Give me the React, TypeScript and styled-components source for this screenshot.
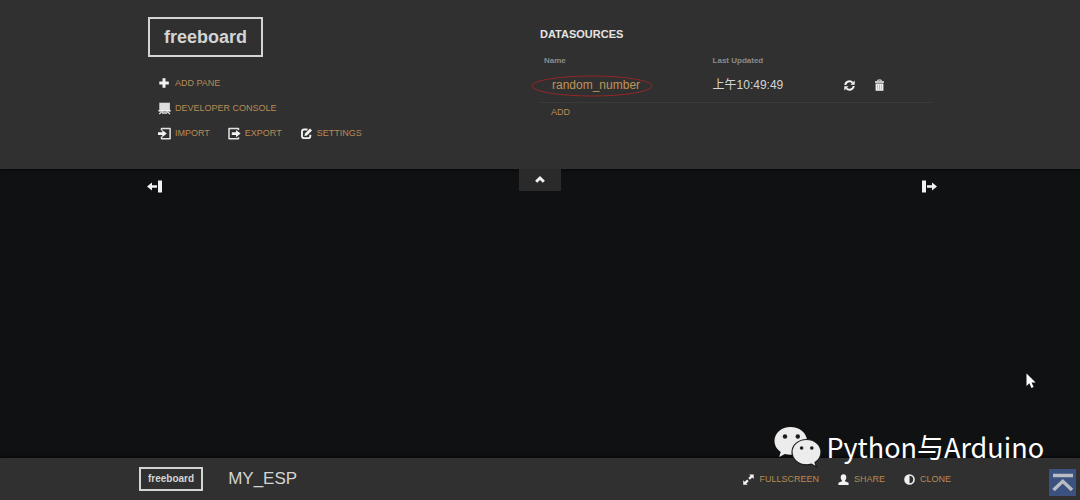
import React from "react";
import styled, { createGlobalStyle } from "styled-components";

const GlobalStyle = createGlobalStyle`
  * { box-sizing: border-box; }
  body {
    margin: 0;
    background: #101113;
    color: #d3d4d4;
    font-family: "Liberation Sans", "Noto Sans CJK SC", sans-serif;
  }
  h1, h2, ul { margin: 0; padding: 0; }
  ul { list-style: none; }
`;

const Page = styled.div`
  position: relative;
  display: flex;
  flex-direction: column;
  min-height: 100vh;
`;

const Header = styled.header`
  background: #303030;
  padding: 17px 16px 28px;
  box-shadow: 0 0 4px #000;
`;

const HeaderInner = styled.div`
  display: grid;
  grid-template-columns: 1fr 1fr;
  max-width: 784px;
  margin: 0 auto;
`;

const Brand = styled.h1`
  width: fit-content;
  padding: 0 14px;
  border: 2px solid #d3d4d4;
  font-size: 18px;
  line-height: 36px;
`;

const SmallBrand = styled.a`
  padding: 0 7px;
  border: 2px solid #d3d4d4;
  color: #d3d4d4;
  font-size: 10px;
  font-weight: bold;
  line-height: 20px;
  text-decoration: none;
`;

const Tools = styled.div`
  display: flex;
  flex-direction: column;
  gap: 9px;
  padding: 18px 0 0 10px;
`;

const ToolRow = styled.ul`
  display: flex;
  gap: 18px;
`;

const ToolButton = styled.button`
  display: flex;
  align-items: center;
  gap: 4px;
  height: 16px;
  padding: 0;
  border: 0;
  background: none;
  color: #b88b54;
  font: 9px/16px "Liberation Sans", sans-serif;
  cursor: pointer;
`;

const IconButton = styled.button`
  display: flex;
  padding: 0;
  border: 0;
  background: none;
  cursor: pointer;
`;

const Glyph = styled.svg<{ $size?: number }>`
  display: block;
  flex: none;
  width: ${(p) => p.$size ?? 13}px;
  height: ${(p) => p.$size ?? 13}px;
  fill: #f2f2f2;
  overflow: visible;
`;

const SectionTitle = styled.h2`
  padding-top: 10px;
  color: #e4e4e4;
  font-size: 11px;
  line-height: 14px;
`;

const SourceTable = styled.table`
  width: 100%;
  margin-top: 12px;
  border-collapse: collapse;
  table-layout: fixed;
`;

const Th = styled.th<{ $width?: string }>`
  width: ${(p) => p.$width ?? "auto"};
  padding: 0 4px;
  color: #8b8b8b;
  font-size: 8px;
  line-height: 16px;
  text-align: left;
`;

const Td = styled.td`
  height: 33px;
  padding: 0 4px;
  border-bottom: 1px solid #3a3a3a;
  font-size: 12px;
  line-height: 16px;
`;

const SourceLink = styled.a`
  position: relative;
  padding-left: 8px;
  color: #c09358;
  text-decoration: none;
`;

const Highlight = styled.svg`
  position: absolute;
  top: -3px;
  left: -13px;
  width: 122px;
  height: 22px;
  fill: none;
  stroke: #94262a;
  overflow: visible;
  pointer-events: none;
`;

const Actions = styled.div`
  display: flex;
  gap: 17px;
  padding-left: 1px;
`;

const AddRow = styled.div`
  padding: 1px 0 0 11px;
`;

const Board = styled.main`
  flex: 1;
  padding: 0 16px;
`;

const BoardControls = styled.div`
  display: grid;
  grid-template-columns: 1fr auto 1fr;
  align-items: start;
  max-width: 794px;
  margin: 0 auto;
`;

const ColumnButton = styled(IconButton)<{ $end?: boolean }>`
  margin-top: 10px;
  padding-left: ${(p) => (p.$end ? 0 : 4)}px;
  justify-self: ${(p) => (p.$end ? "end" : "start")};
`;

const ToggleButton = styled(IconButton)`
  justify-content: center;
  width: 42px;
  padding: 4px 0 5px;
  background: #2a2a2a;
`;

const Footer = styled.footer`
  background: #303030;
  padding: 9px 16px 9px 26px;
  box-shadow: 0 0 4px #000;
`;

const FooterInner = styled.div`
  display: flex;
  align-items: center;
  max-width: 812px;
  margin: 0 auto;
`;

const BoardName = styled.span`
  flex: 1;
  padding-left: 25px;
  font-size: 17px;
  line-height: 24px;
`;

const Watermark = styled.div`
  position: absolute;
  right: 36px;
  bottom: 31px;
  display: flex;
  align-items: center;
  gap: 4px;
  color: #fff;
  font: 27px/44px "Noto Sans CJK SC", sans-serif;
  pointer-events: none;
`;

const ChatLogo = styled.svg`
  width: 48px;
  height: 42px;
`;

const TopButton = styled.button`
  position: absolute;
  right: 4px;
  bottom: 4px;
  width: 27px;
  height: 27px;
  padding: 0;
  border: 0;
  background: #3b5180;
  cursor: pointer;
`;

const Pointer = styled.svg`
  position: absolute;
  right: 44px;
  bottom: 111px;
  width: 10px;
  height: 16px;
  fill: #fff;
  pointer-events: none;
`;

const icons = {
  plus: <path d="M4.500 1.300h3v3.200h3.300v3H7.500v3.300h-3V7.500H1.300v-3h3.200z" />,
  console: (
    <>
      <path fill="#dedede" d="M1.300.700h10.600v8H1.300z" />
      <path d="M.5 8h12.200v1.600H.5z" />
      <path d="M4.400 9.300 1.200 12M8.800 9.300 12 12M4 11h5.200" fill="none" stroke="#dedede" strokeWidth="1.400" />
    </>
  ),
  importing: (
    <>
      <path d="M3.500 3.600V1.400h8.600v10.400H3.500V9.600" fill="none" stroke="#e4e4e4" strokeWidth="1.500" strokeLinejoin="round" />
      <path d="M0 5.300h4.200V2.900l4.600 3.700-4.600 3.600V7.900H0z" />
    </>
  ),
  exporting: (
    <>
      <path d="M10.500 3V1.400H1v10.400h9.500V10.200" fill="none" stroke="#e4e4e4" strokeWidth="1.500" strokeLinejoin="round" />
      <path d="M3.800 5.300H8V2.900l4.600 3.700L8 10.200V7.900H3.800z" />
    </>
  ),
  edit: (
    <>
      <path d="M7.500 2.500H4.200Q2 2.500 2 4.700v4.200q0 2.200 2.200 2.200h3.900q2.200 0 2.200-2.200V7.800" fill="none" stroke="#f2f2f2" strokeWidth="1.900" />
      <path d="m5 6.400 5-5 2 2-5 5-2.600.6z" />
    </>
  ),
  refresh: (
    <>
      <path d="M2.300 6A4.200 4.200 0 0 1 9.600 3.700M10.700 7A4.200 4.200 0 0 1 3.400 9.300" fill="none" stroke="#f2f2f2" strokeWidth="2" />
      <path d="M11.700 1.500v4.300H7.400zM1.300 11.500V7.200h4.300z" />
    </>
  ),
  trash: (
    <>
      <path d="M2 2.200h9v1.600H2zM2.600 4.500h7.800v7.300H2.600z" />
      <path d="M4.800 2.300V1h3.400v1.300" fill="none" stroke="#f2f2f2" />
      <path d="M4.600 5.500v5.200M6.500 5.500v5.200M8.400 5.500v5.200" stroke="#8a8a8a" strokeWidth=".5" />
    </>
  ),
  expand: (
    <>
      <path d="M7.200 1.400h4.500v4.500zM5.700 11.700H1.200V7.200z" />
      <path d="m9.900 3.200-2.800 2.700M3.100 10l2.800-2.700" stroke="#f2f2f2" strokeWidth="2.400" />
    </>
  ),
  user: <path d="M6.500 1.300c2 0 2.900 1.400 2.800 3.100 0 1.400-.6 2.400-1.300 3v.9l3.600 1.500v2.100H1.400V9.800L5 8.300v-.9c-.7-.6-1.300-1.600-1.300-3C3.600 2.700 4.500 1.300 6.500 1.300z" />,
  contrast: (
    <>
      <circle cx="6.500" cy="6.500" r="4.500" fill="none" stroke="#f2f2f2" strokeWidth="1.600" />
      <path d="M6.500 2a4.500 4.500 0 0 0 0 9z" />
    </>
  ),
  columnLeft: <path d="M11 .5h4v12h-4zM0 6.500 5 2.500v2.800h5v2.400H5v2.800z" />,
  columnRight: <path d="M0 .5h4v12H0zM15 6.500l-5-4v2.800H5v2.400h5v2.800z" />,
  chevronUp: <path d="m6 3 4.900 4.700-2.100 2.100L6 7.100 3.200 9.800 1.100 7.700z" />,
};

type IconName = keyof typeof icons;

function Icon({ name }: { name: IconName }) {
  return (
    <Glyph viewBox="0 0 13 13" aria-hidden="true">
      {icons[name]}
    </Glyph>
  );
}

function Tool({ icon, label }: { icon: IconName; label: string }) {
  return (
    <li>
      <ToolButton type="button">
        <Icon name={icon} />
        {label}
      </ToolButton>
    </li>
  );
}

function ColumnGlyph({ name }: { name: IconName }) {
  return (
    <Glyph $size={15} viewBox="0 0 15 13" aria-hidden="true">
      {icons[name]}
    </Glyph>
  );
}

export default function App() {
  return (
    <Page>
      <GlobalStyle />
      <Header>
        <HeaderInner>
          <div>
            <Brand>freeboard</Brand>
            <Tools>
              <ToolRow>
                <Tool icon="plus" label="ADD PANE" />
              </ToolRow>
              <ToolRow>
                <Tool icon="console" label="DEVELOPER CONSOLE" />
              </ToolRow>
              <ToolRow>
                <Tool icon="importing" label="IMPORT" />
                <Tool icon="exporting" label="EXPORT" />
                <Tool icon="edit" label="SETTINGS" />
              </ToolRow>
            </Tools>
          </div>
          <section>
            <SectionTitle>DATASOURCES</SectionTitle>
            <SourceTable>
              <thead>
                <tr>
                  <Th $width="43%">Name</Th>
                  <Th $width="33%">Last Updated</Th>
                  <Th aria-label="Actions" />
                </tr>
              </thead>
              <tbody>
                <tr>
                  <Td>
                    <SourceLink href="#random_number">
                      random_number
                      <Highlight viewBox="0 0 122 22" aria-hidden="true">
                        <ellipse cx="61" cy="11" rx="60" ry="10" />
                      </Highlight>
                    </SourceLink>
                  </Td>
                  <Td>上午10:49:49</Td>
                  <Td>
                    <Actions>
                      <IconButton type="button" aria-label="Refresh">
                        <Icon name="refresh" />
                      </IconButton>
                      <IconButton type="button" aria-label="Delete">
                        <Icon name="trash" />
                      </IconButton>
                    </Actions>
                  </Td>
                </tr>
              </tbody>
            </SourceTable>
            <AddRow>
              <ToolButton type="button">ADD</ToolButton>
            </AddRow>
          </section>
        </HeaderInner>
      </Header>

      <Board>
        <BoardControls>
          <ColumnButton type="button" aria-label="Add column left">
            <ColumnGlyph name="columnLeft" />
          </ColumnButton>
          <ToggleButton type="button" aria-label="Hide header">
            <Icon name="chevronUp" />
          </ToggleButton>
          <ColumnButton $end type="button" aria-label="Add column right">
            <ColumnGlyph name="columnRight" />
          </ColumnButton>
        </BoardControls>
      </Board>

      <Footer>
        <FooterInner>
          <SmallBrand href="#freeboard">freeboard</SmallBrand>
          <BoardName>MY_ESP</BoardName>
          <ToolRow>
            <Tool icon="expand" label="FULLSCREEN" />
            <Tool icon="user" label="SHARE" />
            <Tool icon="contrast" label="CLONE" />
          </ToolRow>
        </FooterInner>
      </Footer>

      <Pointer viewBox="0 0 10 16" aria-hidden="true">
        <path d="M.5.500v12.500l2.900-2.700 2 4.700 2.200-1-2-4.500h4z" />
      </Pointer>

      <Watermark>
        <ChatLogo viewBox="0 0 48 42" aria-hidden="true">
          <path
            fill="#ececec"
            d="M16.500 1C7.500 1 .5 7 .5 15c0 4.600 2.400 8.300 6.200 10.900L5.200 31l5.700-3c1.800.5 3.700.8 5.600.8C25.500 28.800 33 23 33 15S25.500 1 16.500 1z"
          />
          <path
            fill="#ececec"
            stroke="#1a1b1c"
            strokeWidth="1.200"
            d="M32.500 13.500c-8 0-14.500 5.500-14.500 12.600s6.500 12.700 14.500 12.700c1.700 0 3.300-.2 4.800-.7l5.200 3-1.500-4.500c3.700-2.400 6-6.200 6-10.500 0-7.100-6.500-12.600-14.500-12.600z"
          />
          <g fill="#1a1b1c">
            <circle cx="11" cy="10.500" r="2.200" />
            <circle cx="23.800" cy="10.500" r="2.200" />
            <circle cx="27.600" cy="22" r="1.800" />
            <circle cx="37.800" cy="22" r="1.800" />
          </g>
        </ChatLogo>
        Python与Arduino
      </Watermark>

      <TopButton type="button" aria-label="Back to top">
        <svg width="27" height="27" viewBox="0 0 27 27" fill="none" stroke="#b9bcc2" strokeWidth="3.500" aria-hidden="true">
          <path d="M4 6.500h20M4.500 21l9.300-8.700L23 21" />
        </svg>
      </TopButton>
    </Page>
  );
}
